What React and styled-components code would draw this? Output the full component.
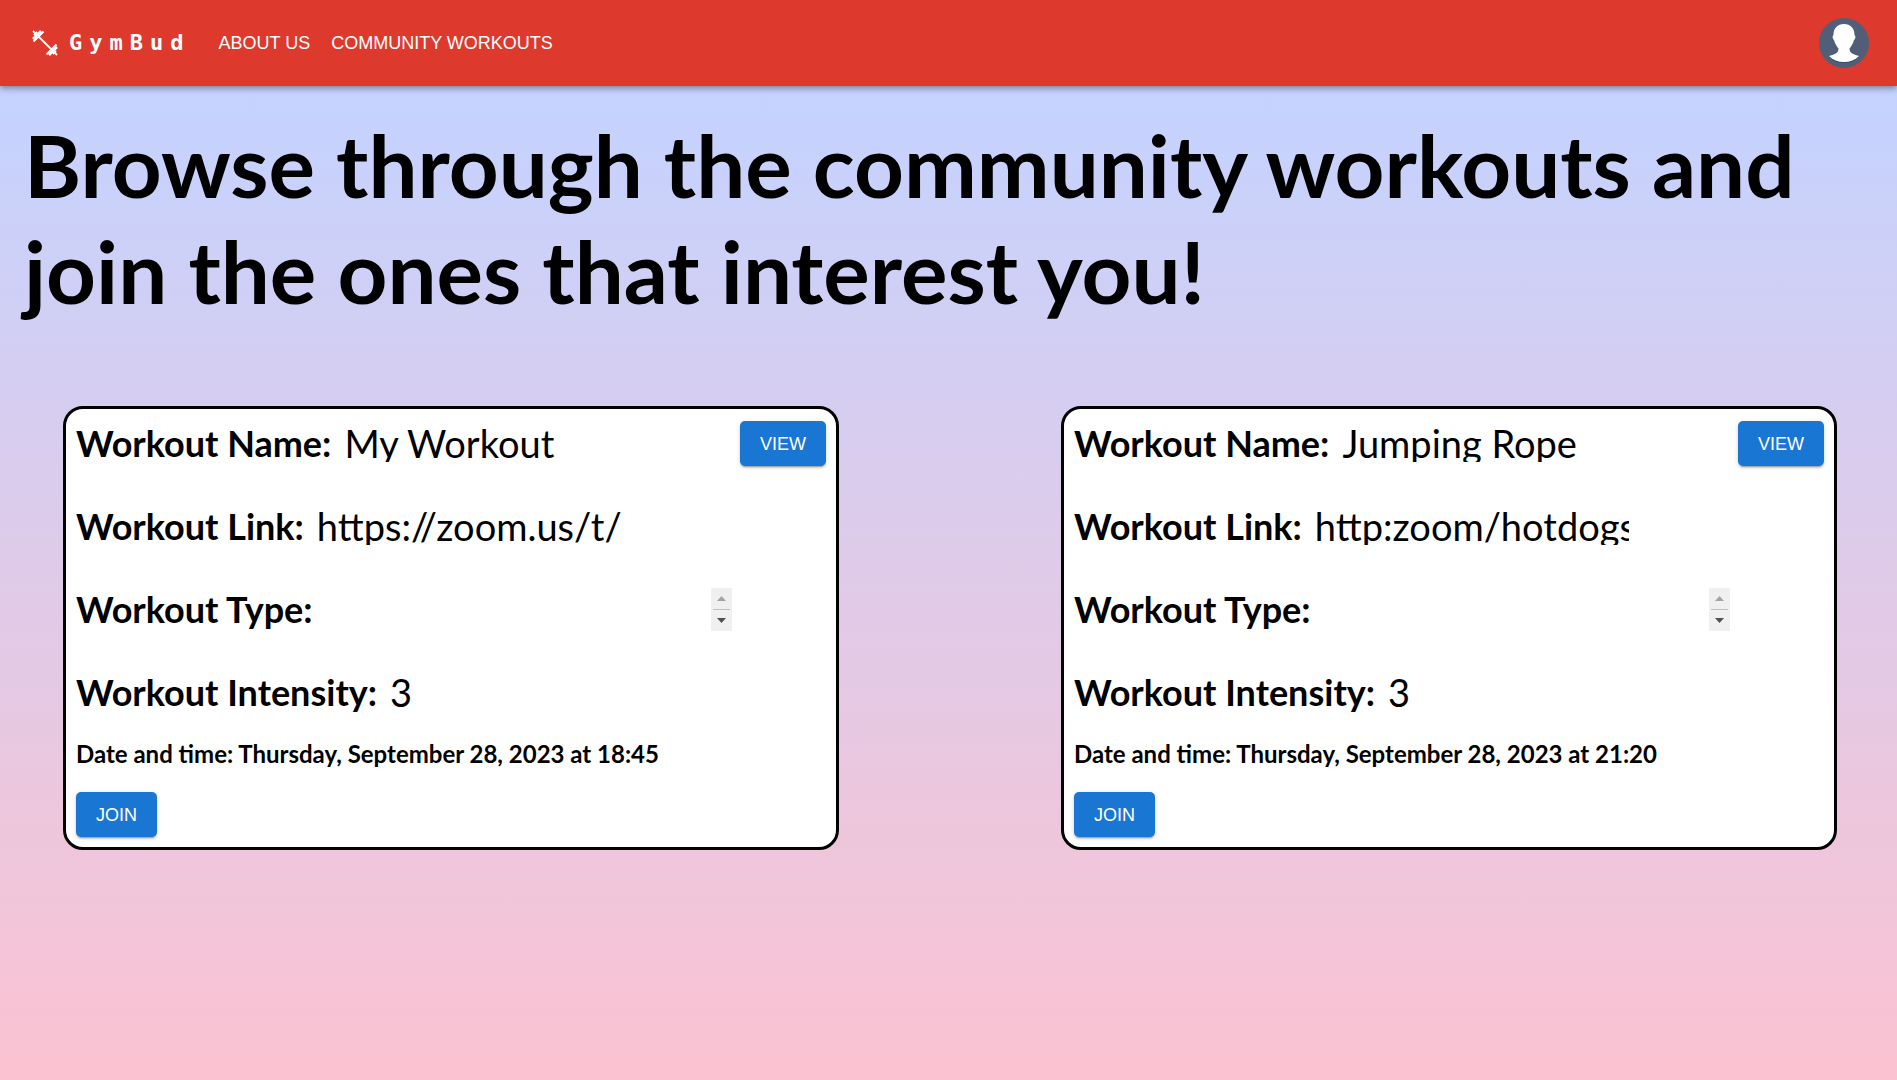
import React, { useId } from 'react';
import styled, { createGlobalStyle } from 'styled-components';

const rounded = '"Lato", "Open Sans", sans-serif';
const sans = '"Liberation Sans", Arial, sans-serif';

const GlobalStyle = createGlobalStyle`
  *, *::before, *::after { box-sizing: border-box; }
  body { margin: 0; color: #000; font-family: ${rounded}; }
`;

const Page = styled.div`
  min-height: 100vh;
  background: linear-gradient(to bottom, #c4d3ff 86px, #fbc2d1);
`;

const AppBar = styled.header`
  display: flex;
  align-items: center;
  height: 86px;
  padding: 0 28px 0 32px;
  color: #fff;
  background: #dd392d;
  box-shadow: 0 2px 4px -1px rgba(0, 0, 0, 0.2), 0 4px 5px rgba(0, 0, 0, 0.14), 0 1px 10px rgba(0, 0, 0, 0.12);
`;

const Brand = styled.a`
  display: flex;
  align-items: center;
  gap: 11px;
  color: inherit;
  font: 700 22px/32px "DejaVu Sans Mono", monospace;
  letter-spacing: 7px;
  text-decoration: none;
`;

const Nav = styled.nav`
  display: flex;
  flex: 1;
  gap: 21px;
  margin-left: 28px;
`;

const NavLink = styled.a`
  color: inherit;
  font: 400 18px/32px ${sans};
  text-decoration: none;
  text-transform: uppercase;
`;

const AvatarButton = styled.button`
  display: flex;
  padding: 0;
  border: 0;
  border-radius: 50%;
  background: none;
  cursor: pointer;
`;

const Title = styled.h1`
  margin: 0;
  padding: 26px 24px 0;
  font-size: 87px;
  font-weight: 700;
  line-height: 106px;
`;

const Cards = styled.main`
  display: grid;
  grid-template-columns: repeat(2, 776px);
  justify-content: space-between;
  gap: 32px;
  padding: 82px 60px 32px 63px;
`;

const Card = styled.article`
  display: flex;
  align-items: flex-start;
  justify-content: space-between;
  padding: 12px 10px 10px;
  border: 3px solid #000;
  border-radius: 20px;
  background: #fff;
`;

const Details = styled.div`
  display: flex;
  flex-direction: column;
  align-items: flex-start;
`;

const Field = styled.div`
  display: flex;
  align-items: center;
  gap: 13px;
  height: 44px;
  margin-bottom: 39px;

  &:last-of-type { margin-bottom: 0; }
`;

const Label = styled.label`
  font-size: 36px;
  font-weight: 700;
  line-height: 44px;
  white-space: nowrap;
`;

const Value = styled.input`
  width: 314px;
  height: 38px;
  padding: 0;
  border: 0;
  color: #000;
  background: transparent;
  font: 400 38px/38px ${rounded};
`;

const TypeBox = styled.div`
  display: flex;
  height: 43px;
`;

const TypeText = styled.textarea`
  width: 385px;
  height: 43px;
  padding: 0;
  border: 0;
  overflow: hidden;
  resize: none;
  background: transparent;
  font: 400 38px/43px ${rounded};
`;

const Scroller = styled.div`
  display: flex;
  flex-direction: column;
  width: 21px;
  padding: 0 2px;
  background: #f0f0f0;
`;

const ScrollButton = styled.button`
  display: flex;
  flex: 1;
  align-items: center;
  justify-content: center;
  padding: 0;
  border: 0;
  color: ${(p) => (p.disabled ? '#a3a3a3' : '#505050')};
  background: none;

  & + & { border-top: 1px solid #c1c1c1; }
`;

const DateLine = styled.p`
  margin: 24px 0 22px;
  font-size: 24px;
  font-weight: 700;
  line-height: 32px;
`;

const Button = styled.button`
  height: 45px;
  padding: 0 20px;
  border: 0;
  border-radius: 5px;
  color: #fff;
  background: #1976d2;
  box-shadow: 0 3px 1px -2px rgba(0, 0, 0, 0.2), 0 2px 2px rgba(0, 0, 0, 0.14), 0 1px 5px rgba(0, 0, 0, 0.12);
  font: 400 18px/32px ${sans};
  text-transform: uppercase;
  cursor: pointer;
`;

const Barbell = () => (
  <svg width="26" height="26" viewBox="0 0 26 26" fill="none" stroke="#fff" aria-hidden="true">
    <path d="M1 1 25 25" strokeWidth="1.800" />
    <path d="M1.500 11.500 11.500 1.500M14.500 24.500 24.500 14.500" strokeWidth="2" />
    <path d="M1 9 9 1M17 25 25 17" strokeWidth="2.600" />
    <path d="M2 5 5 2M21 24 24 21" strokeWidth="2" />
  </svg>
);

const Avatar = () => (
  <svg width="50" height="50" viewBox="0 0 50 50" aria-hidden="true">
    <circle cx="25" cy="25" r="25" fill="#505f77" />
    <path d="M10 38.500C14 43 19 45 25 45s11-2 15-6.500Z" fill="#3f4c63" />
    <path d="M25 6c-6.500 0-10.500 4-10.500 11-1.500 1-1 4 .5 5 1 4 3 6.500 4.500 8.500 0 4-2 5.500-9.500 7.500 4 4 9 6 15 6s11-2 15-6c-7.500-2-9.500-3.500-9.500-7.500 1.500-2 3.500-4.500 4.500-8.500 1.500-1 2-4 .5-5 0-7-4-11-10.500-11Z" fill="#fff" />
  </svg>
);

const Arrow = ({ down }) => (
  <svg width="9" height="5" viewBox="0 0 9 5" fill="currentColor" aria-hidden="true">
    <path d={down ? 'M0 0h9L4.500 5Z' : 'M0 5h9L4.500 0Z'} />
  </svg>
);

function WorkoutCard({ name, link, intensity, date }) {
  const id = useId();
  return (
    <Card>
      <Details>
        <Field>
          <Label htmlFor={id + 'name'}>Workout Name:</Label>
          <Value id={id + 'name'} defaultValue={name} readOnly />
        </Field>
        <Field>
          <Label htmlFor={id + 'link'}>Workout Link:</Label>
          <Value id={id + 'link'} defaultValue={link} readOnly />
        </Field>
        <Field>
          <Label htmlFor={id + 'type'}>Workout Type:</Label>
          <TypeBox>
            <TypeText id={id + 'type'} readOnly />
            <Scroller>
              <ScrollButton aria-label="Scroll up" disabled><Arrow /></ScrollButton>
              <ScrollButton aria-label="Scroll down"><Arrow down /></ScrollButton>
            </Scroller>
          </TypeBox>
        </Field>
        <Field>
          <Label htmlFor={id + 'intensity'}>Workout Intensity:</Label>
          <Value id={id + 'intensity'} defaultValue={intensity} readOnly />
        </Field>
        <DateLine>Date and time: {date}</DateLine>
        <Button>Join</Button>
      </Details>
      <Button>View</Button>
    </Card>
  );
}

const workouts = [
  { name: 'My Workout', link: 'https://zoom.us/t/', intensity: 3, date: 'Thursday, September 28, 2023 at 18:45' },
  { name: 'Jumping Rope', link: 'http:zoom/hotdogs', intensity: 3, date: 'Thursday, September 28, 2023 at 21:20' },
];

export default function App() {
  return (
    <Page>
      <GlobalStyle />
      <AppBar>
        <Brand href="#"><Barbell />GymBud</Brand>
        <Nav>
          <NavLink href="#about">About us</NavLink>
          <NavLink href="#community">Community workouts</NavLink>
        </Nav>
        <AvatarButton aria-label="Account"><Avatar /></AvatarButton>
      </AppBar>
      <Title>Browse through the community workouts and join the ones that interest you!</Title>
      <Cards>
        {workouts.map((w) => <WorkoutCard key={w.name} {...w} />)}
      </Cards>
    </Page>
  );
}
